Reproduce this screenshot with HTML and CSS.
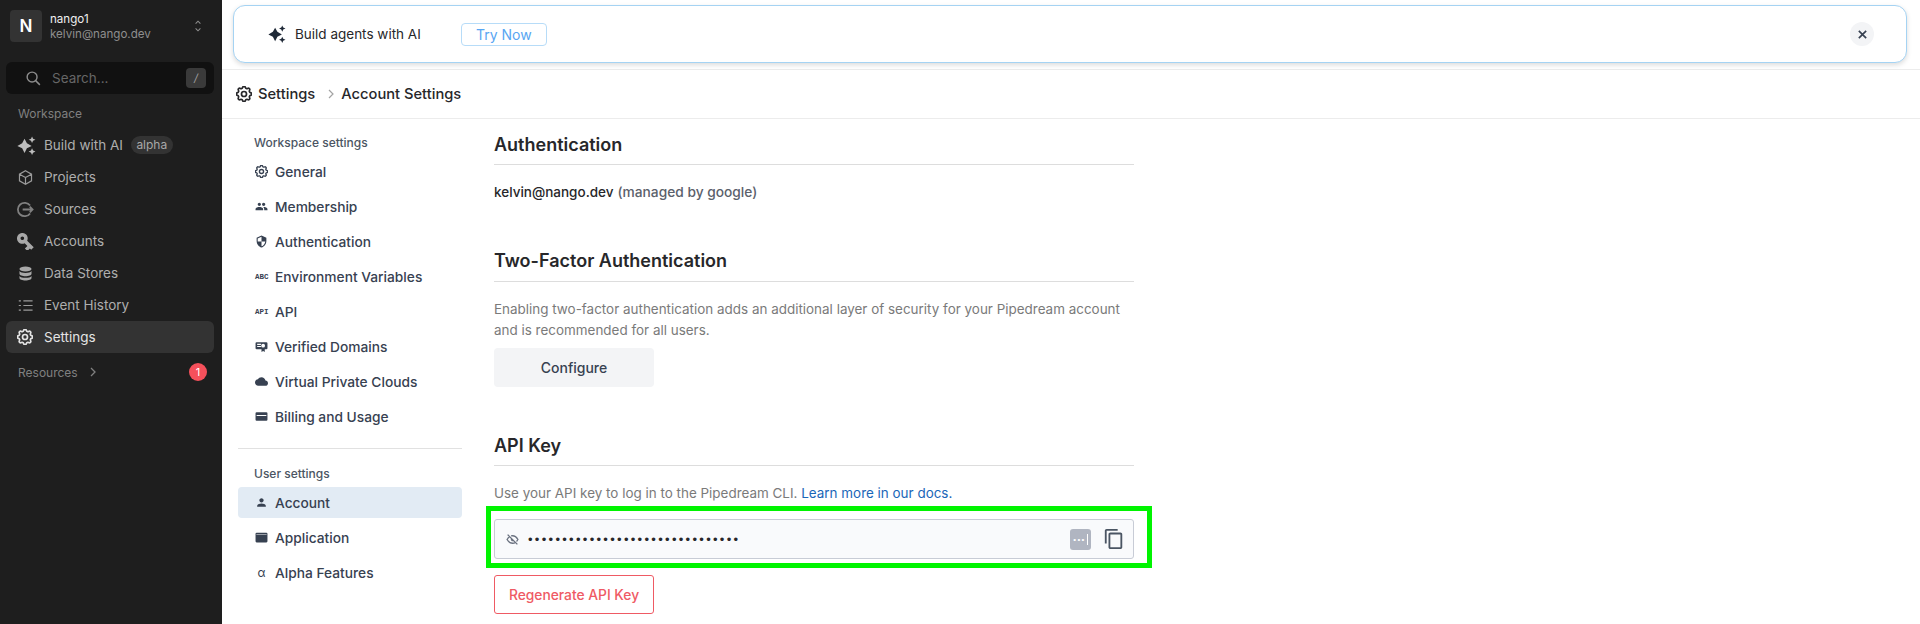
FILE: index.html
```html
<!DOCTYPE html>
<html lang="en">
<head>
<meta charset="utf-8">
<title>Account Settings</title>
<link rel="stylesheet" href="styles.css">
</head>
<body>
<div class="app">
  <aside class="sidebar">
    <div class="org">
      <div class="org-tile">N</div>
      <div class="org-text">
        <div class="org-name">nango1</div>
        <div class="org-mail">kelvin@nango.dev</div>
      </div>
      <svg class="org-chev" viewBox="0 0 12 20"><path d="M3 7l3-3 3 3M3 13l3 3 3-3"/></svg>
    </div>
    <div class="search">
      <svg class="search-icon" viewBox="0 0 24 24"><circle cx="10" cy="10" r="7"/><path d="M21 21l-6-6"/></svg>
      <span class="search-text">Search...</span>
      <span class="kbd">/</span>
    </div>
    <div class="side-label">Workspace</div>
    <nav class="side-nav">
      <a class="side-item">
        <svg class="side-icon fill spark" viewBox="0 0 24 24"><path d="M9.500 3.500L12.500 9 18.500 12.500 12.500 15.500 9.500 21.500 6.500 15.500 .5 12.500 6.500 9z"/><path d="M19 .5l1.300 2.900 3 1.300-3 1.300-1.300 2.900-1.300-2.900-3-1.300 3-1.300z"/><path d="M19 15.500l1.300 2.900 3 1.300-3 1.300-1.300 2.900-1.300-2.900-3-1.300 3-1.300z"/></svg>
        <span>Build with AI</span><span class="pill">alpha</span>
      </a>
      <a class="side-item">
        <svg class="side-icon" viewBox="0 0 24 24"><path d="M12 2.500l8.500 4.800v9.400L12 21.500l-8.500-4.800V7.300zM12 12l8.500-4.700M12 12v9.500M12 12L3.500 7.300"/></svg>
        <span>Projects</span>
      </a>
      <a class="side-item">
        <svg class="side-icon thick" viewBox="0 0 24 24"><path d="M18.500 6.500A9.500 9.500 0 1 0 18.500 17.500M8 12h14M18 8l4 4-4 4"/></svg>
        <span>Sources</span>
      </a>
      <a class="side-item">
        <svg class="side-icon fill" viewBox="2.500 2.500 19 19"><path transform="rotate(45 12 12)" d="M12.650 10C11.830 7.670 9.610 6 7 6c-3.310 0-6 2.690-6 6s2.690 6 6 6c2.610 0 4.830-1.670 5.650-4H17v4h4v-4h2v-4H12.650zM7 14c-1.100 0-2-.9-2-2s.9-2 2-2 2 .9 2 2-.9 2-2 2z"/></svg>
        <span>Accounts</span>
      </a>
      <a class="side-item">
        <svg class="side-icon fill" viewBox="0 0 24 24"><ellipse cx="12" cy="5.500" rx="8.500" ry="3.500"/><path d="M3.500 8.500c1.500 2 4.500 2.800 8.500 2.800s7-.8 8.500-2.800v4c0 2-3.800 3.500-8.500 3.500s-8.500-1.500-8.500-3.500z"/><path d="M3.500 15.500c1.500 2 4.500 2.500 8.500 2.500s7-.5 8.500-2.500v3c0 2-3.800 3.500-8.500 3.500s-8.500-1.500-8.500-3.500z"/></svg>
        <span>Data Stores</span>
      </a>
      <a class="side-item">
        <svg class="side-icon" viewBox="0 0 24 24"><path d="M9 5.500h13M9 12h13M9 18.500h13M2.500 5.500h3M2.500 12h3M2.500 18.500h3"/></svg>
        <span>Event History</span>
      </a>
      <a class="side-item active">
        <svg class="side-icon gear" viewBox="2.500 2.500 19 19"><path d="M10.325 4.317c.426-1.756 2.924-1.756 3.350 0a1.724 1.724 0 0 0 2.573 1.066c1.543-.94 3.310.826 2.370 2.370a1.724 1.724 0 0 0 1.065 2.572c1.756.426 1.756 2.924 0 3.350a1.724 1.724 0 0 0-1.066 2.573c.94 1.543-.826 3.310-2.370 2.370a1.724 1.724 0 0 0-2.572 1.065c-.426 1.756-2.924 1.756-3.350 0a1.724 1.724 0 0 0-2.573-1.066c-1.543.94-3.310-.826-2.370-2.370a1.724 1.724 0 0 0-1.065-2.572c-1.756-.426-1.756-2.924 0-3.350a1.724 1.724 0 0 0 1.066-2.573c-.94-1.543.826-3.310 2.370-2.370c1 .608 2.296.07 2.572-1.065z"/><circle cx="12" cy="12" r="3"/></svg>
        <span>Settings</span>
      </a>
    </nav>
    <div class="resources">
      <span>Resources</span>
      <svg class="res-chev" viewBox="0 0 8 12"><path d="M2 2l4 4-4 4"/></svg>
      <span class="badge">1</span>
    </div>
  </aside>

  <main class="main">
    <div class="banner-zone">
      <div class="banner">
        <svg class="banner-icon" viewBox="0 0 24 24"><path d="M9.500 3.500L12.500 9 18.500 12.500 12.500 15.500 9.500 21.500 6.500 15.500 .5 12.500 6.500 9z"/><path d="M19 .5l1.300 2.900 3 1.300-3 1.300-1.300 2.900-1.300-2.900-3-1.300 3-1.300z"/><path d="M19 15.500l1.300 2.900 3 1.300-3 1.300-1.300 2.900-1.300-2.900-3-1.300 3-1.300z"/></svg>
        <span class="banner-text">Build agents with AI</span>
        <button class="try">Try Now</button>
        <button class="close"><svg viewBox="0 0 12 12"><path d="M2 2l8 8M10 2l-8 8"/></svg></button>
      </div>
    </div>
    <header class="crumbs">
      <svg class="crumb-icon" viewBox="2.500 2.500 19 19"><path d="M10.325 4.317c.426-1.756 2.924-1.756 3.350 0a1.724 1.724 0 0 0 2.573 1.066c1.543-.94 3.310.826 2.370 2.370a1.724 1.724 0 0 0 1.065 2.572c1.756.426 1.756 2.924 0 3.350a1.724 1.724 0 0 0-1.066 2.573c.94 1.543-.826 3.310-2.370 2.370a1.724 1.724 0 0 0-2.572 1.065c-.426 1.756-2.924 1.756-3.350 0a1.724 1.724 0 0 0-2.573-1.066c-1.543.94-3.310-.826-2.370-2.370a1.724 1.724 0 0 0-1.065-2.572c-1.756-.426-1.756-2.924 0-3.350a1.724 1.724 0 0 0 1.066-2.573c-.94-1.543.826-3.310 2.370-2.370c1 .608 2.296.07 2.572-1.065z"/><circle cx="12" cy="12" r="3"/></svg>
      <span class="crumb">Settings</span>
      <svg class="crumb-sep" viewBox="0 0 8 12"><path d="M2 2l4 4-4 4"/></svg>
      <span class="crumb">Account Settings</span>
    </header>
    <div class="body">
      <nav class="settings-nav">
        <div class="nav-head">Workspace settings</div>
        <a class="nav-item"><svg class="nav-icon stroke" viewBox="2.500 2.500 19 19"><path d="M10.325 4.317c.426-1.756 2.924-1.756 3.350 0a1.724 1.724 0 0 0 2.573 1.066c1.543-.94 3.310.826 2.370 2.370a1.724 1.724 0 0 0 1.065 2.572c1.756.426 1.756 2.924 0 3.350a1.724 1.724 0 0 0-1.066 2.573c.94 1.543-.826 3.310-2.370 2.370a1.724 1.724 0 0 0-2.572 1.065c-.426 1.756-2.924 1.756-3.350 0a1.724 1.724 0 0 0-2.573-1.066c-1.543.94-3.310-.826-2.370-2.370a1.724 1.724 0 0 0-1.065-2.572c-1.756-.426-1.756-2.924 0-3.350a1.724 1.724 0 0 0 1.066-2.573c-.94-1.543.826-3.310 2.370-2.370c1 .608 2.296.07 2.572-1.065z"/><circle cx="12" cy="12" r="3"/></svg>General</a>
        <a class="nav-item"><svg class="nav-icon" viewBox="0 0 24 24"><path d="M16 11c1.660 0 2.990-1.340 2.990-3S17.660 5 16 5c-1.660 0-3 1.340-3 3s1.340 3 3 3zm-8 0c1.660 0 2.990-1.340 2.990-3S9.660 5 8 5C6.340 5 5 6.340 5 8s1.340 3 3 3zm0 2c-2.330 0-7 1.170-7 3.500V19h14v-2.500c0-2.330-4.670-3.500-7-3.500zm8 0c-.29 0-.62.02-.97.05 1.160.84 1.970 1.970 1.970 3.450V19h6v-2.500c0-2.330-4.670-3.500-7-3.500z"/></svg>Membership</a>
        <a class="nav-item"><svg class="nav-icon" viewBox="0 0 24 24"><path d="M12 1L3 5v6c0 5.550 3.840 10.740 9 12 5.160-1.260 9-6.450 9-12V5l-9-4zm0 10.990h7c-.53 4.120-3.280 7.790-7 8.940V12H5V6.300l7-3.110v8.800z"/></svg>Authentication</a>
        <a class="nav-item"><span class="nav-glyph">ABC</span>Environment Variables</a>
        <a class="nav-item"><span class="nav-glyph">API</span>API</a>
        <a class="nav-item"><svg class="nav-icon" viewBox="0 0 24 24"><path fill-rule="evenodd" d="M3 4h18a2 2 0 0 1 2 2v9a2 2 0 0 1-2 2h-3v5l-3-1.500-3 1.500v-5H3a2 2 0 0 1-2-2V6a2 2 0 0 1 2-2zm1 3v2h7V7zm0 4v2h7v-2zm11-4a3.500 3.500 0 1 0 0 7 3.500 3.500 0 0 0 0-7z"/></svg>Verified Domains</a>
        <a class="nav-item"><svg class="nav-icon" viewBox="0 0 24 24"><path d="M19.350 10.040C18.670 6.590 15.640 4 12 4 9.110 4 6.600 5.640 5.350 8.040 2.340 8.360 0 10.910 0 14c0 3.310 2.690 6 6 6h13c2.760 0 5-2.240 5-5 0-2.640-2.050-4.780-4.650-4.960z"/></svg>Virtual Private Clouds</a>
        <a class="nav-item"><svg class="nav-icon" viewBox="0 0 24 24"><path fill-rule="evenodd" d="M3 4h18a2 2 0 0 1 2 2v12a2 2 0 0 1-2 2H3a2 2 0 0 1-2-2V6a2 2 0 0 1 2-2zm0 5v2h18V9z"/></svg>Billing and Usage</a>
        <div class="nav-rule"></div>
        <div class="nav-head">User settings</div>
        <a class="nav-item current"><svg class="nav-icon" viewBox="0 0 24 24"><path d="M12 12c2.210 0 4-1.790 4-4s-1.790-4-4-4-4 1.790-4 4 1.790 4 4 4zm0 2c-2.670 0-8 1.340-8 4v2h16v-2c0-2.660-5.330-4-8-4z"/></svg>Account</a>
        <a class="nav-item"><svg class="nav-icon" viewBox="0 0 24 24"><path fill-rule="evenodd" d="M3 3h18a2 2 0 0 1 2 2v14a2 2 0 0 1-2 2H3a2 2 0 0 1-2-2V5a2 2 0 0 1 2-2zm-.5 4.500v-1h19v1z"/></svg>Application</a>
        <a class="nav-item"><span class="nav-glyph alpha">α</span>Alpha Features</a>
      </nav>
      <section class="content">
        <div class="block first">
          <h2 class="title">Authentication</h2>
          <p class="account"><span class="strong">kelvin@nango.dev</span> <span class="managed">(managed by google)</span></p>
        </div>
        <div class="block two-factor">
          <h2 class="title">Two-Factor Authentication</h2>
          <p class="muted">Enabling two-factor authentication adds an additional layer of security for your Pipedream account and is recommended for all users.</p>
          <button class="configure">Configure</button>
        </div>
        <div class="block api">
          <h2 class="title">API Key</h2>
          <p class="muted use">Use your API key to log in to the Pipedream CLI. <a class="link">Learn more in our docs.</a></p>
          <div class="key-field">
            <svg class="eye" viewBox="0 0 24 24"><path d="M3 3l18 18M10.600 10.600a2 2 0 0 0 2.800 2.800M9.400 5.400A9.500 9.500 0 0 1 12 5c4 0 7.300 2.300 10 7-.8 1.400-1.700 2.600-2.600 3.600M17.500 17.500C16 18.500 14.100 19 12 19c-4 0-7.300-2.300-10-7 1.400-2.400 3-4.200 4.600-5.500"/></svg>
            <span class="dots">•••••••••••••••••••••••••••••••</span>
            <span class="dots-btn"><span class="dots-btn-text">•••</span><span class="caret"></span></span>
            <svg class="copy" viewBox="0 0 24 24"><path d="M16 1H4c-1.100 0-2 .9-2 2v14h2V3h12V1zm3 4H8c-1.100 0-2 .9-2 2v14c0 1.100.9 2 2 2h11c1.100 0 2-.9 2-2V7c0-1.100-.9-2-2-2zm0 16H8V7h11v14z"/></svg>
            <div class="highlight"></div>
          </div>
          <button class="regen">Regenerate API Key</button>
        </div>
      </section>
    </div>
  </main>
</div>
</body>
</html>
```
FILE: styles.css
```css
* { box-sizing: border-box; }
html, body { margin: 0; height: 624px; overflow: hidden; background: #fff; }
body { font-family: Inter, "Liberation Sans", sans-serif; color: #1f2937; }
button { font-family: inherit; cursor: pointer; }
p, h2 { margin: 0; }

.app { display: flex; height: 624px; }

/* sidebar */
.sidebar { width: 222px; flex: none; background: #1e1e1e; padding: 10px 8px 0 6px; color: #a8a8a8; }
.org { display: flex; align-items: center; height: 32px; padding-left: 4px; }
.org-tile { width: 32px; height: 32px; border-radius: 4px; background: #333; color: #fff; font-size: 17px; font-weight: 600; display: flex; align-items: center; justify-content: center; }
.org-text { margin: 1px 0 0 8px; flex: 1; }
.org-name { font-size: 11.600px; line-height: 15px; color: #f0f0f0; }
.org-mail { font-size: 11.600px; line-height: 15px; color: #8e8e8e; }
.org-chev { width: 10px; height: 16px; margin-right: 11px; fill: none; stroke: #8e8e8e; stroke-width: 1.300; }

.search { display: flex; align-items: center; height: 32px; margin-top: 20px; padding: 0 8px 0 19px; background: #111; border-radius: 6px; }
.search-icon { width: 17px; height: 17px; fill: none; stroke: #8c8c8c; stroke-width: 2; }
.search-text { margin-left: 10px; flex: 1; font-size: 13.500px; color: #666; }
.kbd { width: 20px; height: 20px; border-radius: 4px; background: #3a3a3a; color: #a0a0a0; font-size: 11px; display: flex; align-items: center; justify-content: center; font-style: italic; }

.side-label { margin: 12px 0 0 12px; height: 16px; line-height: 16px; font-size: 12px; color: #808080; }
.side-nav { margin-top: 7px; display: flex; flex-direction: column; }
.side-item { display: flex; align-items: center; height: 32px; padding-left: 11px; font-size: 13.500px; color: #aeaeae; border-radius: 6px; }
.side-item.active { background: #333; color: #e4e4e4; }
.side-icon { width: 17px; height: 17px; margin-right: 10px; flex: none; fill: none; stroke: #9b9b9b; stroke-width: 1.700; }
.side-icon.fill { fill: #a8a8a8; stroke: none; }
.side-icon.spark { width: 19px; height: 19px; margin-right: 8px; fill: #bdbdbd; }
.side-icon.thick { stroke-width: 2.500; stroke: #808080; }
.side-icon.gear { width: 16px; height: 16px; margin-right: 11px; stroke: #e4e4e4; stroke-width: 2; }
.pill { margin-left: 8px; padding: 0 5.500px; height: 18px; line-height: 17px; border-radius: 9px; background: #333; font-size: 12px; color: #a8a8a8; }

.resources { display: flex; align-items: center; height: 20px; margin: 9px 0 0 12px; padding-right: 2px; font-size: 12px; color: #808080; }
.res-chev { width: 8px; height: 12px; margin-left: 11px; fill: none; stroke: #808080; stroke-width: 1.300; }
.badge { margin-left: auto; margin-right: 5px; width: 18px; height: 18px; border-radius: 50%; background: #f5505b; color: #fff; font-size: 11px; display: flex; align-items: center; justify-content: center; }

/* main */
.main { flex: 1; min-width: 0; display: flex; flex-direction: column; }
.banner-zone { height: 70px; padding: 5px 13px 0 11px; border-bottom: 1px solid #ececec; }
.banner { display: flex; align-items: center; height: 58px; padding: 0 32px 0 34px; border: 1px solid #a5d3f3; border-radius: 12px; background: #fff; box-shadow: 0 2px 5px rgba(0,0,0,.14); }
.banner-icon { width: 18px; height: 18px; fill: #1f2937; }
.banner-text { margin-left: 9px; font-size: 13.500px; color: #27272a; }
.try { margin-left: 40px; width: 86px; height: 23px; padding: 0; border: 1px solid #b7dcf8; border-radius: 4px; background: #fff; color: #58a6f2; font-size: 14px; }
.close { margin-left: auto; width: 24px; height: 24px; padding: 0; border: 0; border-radius: 50%; background: #f3f4f6; display: flex; align-items: center; justify-content: center; }
.close svg { width: 11px; height: 11px; fill: none; stroke: #374151; stroke-width: 1.800; }

.crumbs { display: flex; align-items: center; height: 49px; padding-left: 14px; border-bottom: 1px solid #ececec; }
.crumb-icon { width: 16px; height: 16px; fill: none; stroke: #27272a; stroke-width: 2; }
.crumb { margin-left: 6px; font-size: 14.700px; font-weight: 500; color: #27272a; }
.crumb-sep { width: 8px; height: 12px; margin: 0 6px 0 12px; fill: none; stroke: #a3a3a3; stroke-width: 1.200; }
.crumb-sep + .crumb { margin-left: 0; }

.body { display: flex; flex: 1; min-height: 0; }
.settings-nav { width: 224px; margin-left: 16px; flex: none; padding-top: 16px; }
.nav-head { height: 16px; line-height: 16px; padding-left: 16px; font-size: 12px; font-weight: 500; color: #4b5563; }
.nav-item { display: flex; align-items: center; height: 31px; margin-top: 4px; padding-left: 17px; font-size: 13.750px; font-weight: 500; color: #374151; border-radius: 4px; }
.nav-head + .nav-item { margin-top: 5px; }
.nav-item.current { background: #e2ebf4; }
.nav-icon { width: 13px; height: 13px; margin-right: 7px; flex: none; fill: #374151; }
.nav-icon.stroke { fill: none; stroke: #374151; stroke-width: 2; }
.nav-glyph { width: 13px; margin-right: 7px; flex: none; font-family: "Liberation Mono", monospace; font-size: 7.500px; font-weight: 700; color: #374151; text-align: center; white-space: nowrap; }
.nav-glyph.alpha { font-family: Inter, sans-serif; font-size: 12px; font-weight: 400; }
.nav-rule { height: 1px; margin: 16px 0 17px; background: #e1e1e1; }

.content { width: 640px; margin-left: 32px; flex: none; }
.block.first { padding-top: 14px; }
.title { height: 32px; line-height: 24px; padding-bottom: 8px; font-size: 18px; font-weight: 600; color: #27272a; border-bottom: 1px solid #ddd; }
.two-factor .title { height: 33px; }
.account { margin-top: 17px; line-height: 20px; font-size: 13.750px; }
.strong { font-size: 13.500px; font-weight: 500; color: #27272a; }
.managed { font-weight: 500; color: #5b616b; }
.two-factor { margin-top: 47px; }
.muted { font-size: 13.450px; line-height: 21px; color: #7a7a7a; }
.two-factor .muted { margin-top: 17px; }
.configure { display: block; width: 160px; height: 39px; margin-top: 7px; border: 0; padding: 0; border-radius: 4px; background: #f3f4f6; font-size: 14px; font-weight: 500; color: #374151; }
.api { margin-top: 47px; }
.use { margin-top: 17px; }
.link { color: #1a66b8; }
.key-field { position: relative; display: flex; align-items: center; height: 40px; margin-top: 15px; padding: 0 8px 0 11px; border: 1px solid #c8ccd6; border-radius: 3px; background: #f9fafc; }
.eye { width: 13px; height: 13px; flex: none; fill: none; stroke: #6b7280; stroke-width: 2.500; }
.dots { margin-left: 9px; flex: 1; font-family: "Liberation Sans", sans-serif; font-size: 13px; letter-spacing: 2.300px; color: #27272a; }
.dots-btn { display: flex; align-items: center; justify-content: center; gap: 1px; width: 21px; height: 21px; border-radius: 3px; background: #b0b5c1; color: #fff; font-family: "Liberation Sans", sans-serif; font-size: 8px; letter-spacing: 1.300px; }
.caret { width: 1px; height: 11px; background: #fff; }
.copy { width: 22px; height: 22px; margin-left: 12px; fill: #4b5563; }
.highlight { position: absolute; inset: -14px -19px -10px -9px; border: 5px solid #00f400; pointer-events: none; }
.regen { display: block; width: 160px; height: 39px; margin-top: 16px; padding: 0; border: 1px solid #ef5a64; border-radius: 3px; background: #fff; color: #ef5a64; font-size: 13.800px; font-weight: 500; }
```
